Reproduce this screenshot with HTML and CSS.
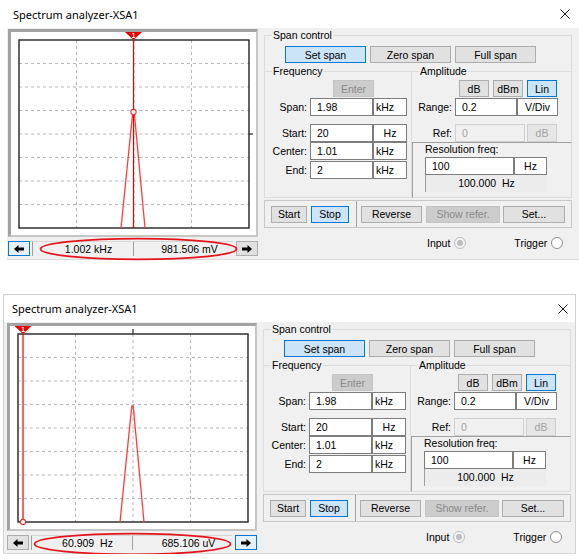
FILE: index.html
```html
<!DOCTYPE html>
<html>
<head>
<meta charset="utf-8">
<link rel="stylesheet" href="styles.css">
</head>
<body>
<div class="win w1">
  <div class="titlebar">
    <span class="title">Spectrum analyzer-XSA1</span>
    <svg class="close" viewBox="0 0 10 10" width="10" height="10"><path d="M0.5 0.5L9.5 9.5M9.5 0.5L0.5 9.5"/></svg>
  </div>
  <div class="client">
    <div class="left">
      <div class="scope">
        <svg class="plot" width="245" height="203" viewBox="0 0 245 203">
          <path class="grid" d="M65.5 8V196M123 8V196M180.5 8V196M8 31.5H238M8 55H238M8 78.5H238M8 102H238M8 125.5H238M8 149H238M8 172.5H238"/>
          <rect class="frame" x="8" y="8" width="230" height="188"/>
          <path class="tick" d="M238 102H242"/>
          <polyline class="sig" points="110,196 121.8,80 123.2,80 134,196"/>
          <path class="cur" d="M122.5 8V196"/>
          <circle class="dot" cx="122.5" cy="80" r="2.6"/>
          <path class="mk" d="M114 0H131L122.5 8Z"/>
          <text class="mkt" x="122.5" y="6">1</text>
        </svg>
      </div>
      <div class="readbar">
        <div class="arrow sel"><svg width="10" height="8" viewBox="0 0 10 8"><path d="M0 4L4.5 0V2.5H10V5.5H4.5V8Z"/></svg></div>
        <div class="read r1">1.002 kHz</div>
        <div class="read r2">981.506 mV</div>
        <div class="arrow ra"><svg width="10" height="8" viewBox="0 0 10 8"><path d="M10 4L5.5 0V2.5H0V5.5H5.5V8Z"/></svg></div>
        <svg class="ring" width="199" height="24" viewBox="0 0 199 24"><ellipse cx="99.5" cy="12" rx="98" ry="10.3"/></svg>
      </div>
    </div>
    <div class="panel">
      <div class="grp spanctl">
        <span class="lgd">Span control</span>
        <div class="row3">
          <div class="btn sel">Set span</div>
          <div class="btn">Zero span</div>
          <div class="btn">Full span</div>
        </div>
      </div>
      <div class="mid">
        <div class="grp freq">
          <span class="lgd">Frequency</span>
          <div class="btn dis enter">Enter</div>
          <div class="frow f1"><span class="lab">Span:</span><span class="inp">1.98</span><span class="unit l">kHz</span></div>
          <div class="frow f2"><span class="lab">Start:</span><span class="inp">20</span><span class="unit">Hz</span></div>
          <div class="frow f3"><span class="lab">Center:</span><span class="inp">1.01</span><span class="unit l">kHz</span></div>
          <div class="frow f4"><span class="lab">End:</span><span class="inp">2</span><span class="unit l">kHz</span></div>
        </div>
        <div class="ampcol">
          <div class="grp amp">
            <span class="lgd">Amplitude</span>
            <div class="arow"><div class="btn">dB</div><div class="btn">dBm</div><div class="btn sel">Lin</div></div>
            <div class="frow range"><span class="lab">Range:</span><span class="inp">0.2</span><span class="unit">V/Div</span></div>
            <div class="frow ref"><span class="lab">Ref:</span><span class="inp dis">0</span><span class="unit dis">dB</span></div>
          </div>
          <div class="res">
            <div class="reslab">Resolution freq:</div>
            <div class="frow rrow"><span class="inp">100</span><span class="unit">Hz</span></div>
            <div class="resval">100.000&nbsp; Hz</div>
          </div>
        </div>
      </div>
      <div class="brow">
        <div class="ss"><div class="btn b-start">Start</div><div class="btn sel b-stop">Stop</div></div>
        <div class="rest"><div class="btn b-rev">Reverse</div><div class="btn dis b-show">Show refer.</div><div class="btn b-set">Set...</div></div>
      </div>
      <div class="radios">
        <span class="rt1">Input</span><span class="radio on"></span><span class="rt2">Trigger</span><span class="radio"></span>
      </div>
    </div>
  </div>
</div>

<div class="win w2">
  <div class="titlebar">
    <span class="title">Spectrum analyzer-XSA1</span>
    <svg class="close" viewBox="0 0 10 10" width="10" height="10"><path d="M0.5 0.5L9.5 9.5M9.5 0.5L0.5 9.5"/></svg>
  </div>
  <div class="client">
    <div class="left">
      <div class="scope">
        <svg class="plot" width="245" height="203" viewBox="0 0 245 203">
          <path class="grid" d="M65.5 8V196M123 8V196M180.5 8V196M8 31.5H238M8 55H238M8 78.5H238M8 102H238M8 125.5H238M8 149H238M8 172.5H238"/>
          <rect class="frame" x="8" y="8" width="230" height="188"/>
          <path class="tick" d="M123 3V8"/>
          <polyline class="sig" points="110,196 121.8,80 123.2,80 134,196"/>
          <path class="cur" d="M13 8V196"/>
          <circle class="dot" cx="13" cy="196" r="2.6"/>
          <path class="mk" d="M4.5 0H21.5L13 8Z"/>
          <text class="mkt" x="13" y="6">1</text>
        </svg>
      </div>
      <div class="readbar">
        <div class="arrow"><svg width="10" height="8" viewBox="0 0 10 8"><path d="M0 4L4.5 0V2.5H10V5.5H4.5V8Z"/></svg></div>
        <div class="read r1">60.909&nbsp; Hz</div>
        <div class="read r2">685.106 uV</div>
        <div class="arrow ra sel"><svg width="10" height="8" viewBox="0 0 10 8"><path d="M10 4L5.5 0V2.5H0V5.5H5.5V8Z"/></svg></div>
        <svg class="ring ring2" width="199" height="24" viewBox="0 0 199 24"><ellipse cx="99.5" cy="12" rx="98" ry="10.3"/></svg>
      </div>
    </div>
    <div class="panel">
      <div class="grp spanctl">
        <span class="lgd">Span control</span>
        <div class="row3">
          <div class="btn sel">Set span</div>
          <div class="btn">Zero span</div>
          <div class="btn">Full span</div>
        </div>
      </div>
      <div class="mid">
        <div class="grp freq">
          <span class="lgd">Frequency</span>
          <div class="btn dis enter">Enter</div>
          <div class="frow f1"><span class="lab">Span:</span><span class="inp">1.98</span><span class="unit l">kHz</span></div>
          <div class="frow f2"><span class="lab">Start:</span><span class="inp">20</span><span class="unit">Hz</span></div>
          <div class="frow f3"><span class="lab">Center:</span><span class="inp">1.01</span><span class="unit l">kHz</span></div>
          <div class="frow f4"><span class="lab">End:</span><span class="inp">2</span><span class="unit l">kHz</span></div>
        </div>
        <div class="ampcol">
          <div class="grp amp">
            <span class="lgd">Amplitude</span>
            <div class="arow"><div class="btn">dB</div><div class="btn">dBm</div><div class="btn sel">Lin</div></div>
            <div class="frow range"><span class="lab">Range:</span><span class="inp">0.2</span><span class="unit">V/Div</span></div>
            <div class="frow ref"><span class="lab">Ref:</span><span class="inp dis">0</span><span class="unit dis">dB</span></div>
          </div>
          <div class="res">
            <div class="reslab">Resolution freq:</div>
            <div class="frow rrow"><span class="inp">100</span><span class="unit">Hz</span></div>
            <div class="resval">100.000&nbsp; Hz</div>
          </div>
        </div>
      </div>
      <div class="brow">
        <div class="ss"><div class="btn b-start">Start</div><div class="btn sel b-stop">Stop</div></div>
        <div class="rest"><div class="btn b-rev">Reverse</div><div class="btn dis b-show">Show refer.</div><div class="btn b-set">Set...</div></div>
      </div>
      <div class="radios">
        <span class="rt1">Input</span><span class="radio on"></span><span class="rt2">Trigger</span><span class="radio"></span>
      </div>
    </div>
  </div>
</div>
</body>
</html>
```

FILE: styles.css
```css
* { box-sizing: border-box; }
body {
  margin: 0;
  background: #fff;
  font-family: "Liberation Sans", Arial, sans-serif;
  font-size: 10.5px;
  color: #000;
}
.win { width: 572px; background: #fff; }
.w1 { margin-left: 7px; }
.w2 {
  margin-left: 3px;
  margin-top: 34px;
  width: 573px;
  border: 1px solid #d2d2d2;
  border-bottom: none;
  overflow: hidden;
}
.titlebar {
  height: 28px;
  display: flex;
  align-items: center;
  justify-content: space-between;
  background: #fff;
  padding: 0 9px 0 6px;
}
.w2 .titlebar { height: 27px; padding: 0 7px 0 8px; }
.title {
  font-family: "Noto Sans", "Liberation Sans", sans-serif;
  font-size: 11px;
  color: #000;
}
.close path { stroke: #1a1a1a; stroke-width: 1; fill: none; }
.close { display: block; }

.client {
  display: flex;
  height: 232px;
  background: #f0f0f0;
  border-bottom: 1px solid #dadada;
}
.w2 .client { padding-left: 2px; height: 232px; }
.left { margin-left: 1px; margin-top: 1px; width: 251px; flex: none; }
.scope {
  width: 250px;
  height: 208px;
  border-style: solid;
  border-width: 3px 2px 2px 3px;
  border-color: #a2a2a2 #c6c6c6 #c6c6c6 #a2a2a2;
  background: #fff;
}
.plot { display: block; }
.grid { stroke: #b8b8b8; stroke-width: 1; stroke-dasharray: 3 3; fill: none; }
.frame { fill: none; stroke: #222; stroke-width: 1.4; }
.tick { stroke: #222; stroke-width: 1.2; fill: none; }
.sig { fill: none; stroke: #ff3b3b; stroke-width: 1.3; }
.cur { stroke: #e80000; stroke-width: 1.2; fill: none; }
.dot { fill: #fff; stroke: #f03030; stroke-width: 1.1; }
.mk { fill: #e80000; }
.mkt { fill: #fff; font-family: "Liberation Sans", sans-serif; font-size: 6.5px; font-weight: bold; text-anchor: middle; }

.readbar { position: relative; display: flex; margin-top: 4px; height: 15px; }
.arrow {
  width: 22px;
  height: 15px;
  border: 1px solid #adadad;
  background: #e1e1e1;
  display: flex;
  align-items: center;
  justify-content: center;
  flex: none;
}
.arrow.sel { border-color: #0078d7; background: #e5f1fb; }
.arrow path { fill: #000; }
.ra { margin-left: 3px; }
.read {
  width: 100px;
  height: 15px;
  background: #f0f0f0;
  border-top: 1px solid #d6d6d6;
  border-left: 1px solid #a0a0a0;
  text-align: center;
  padding-left: 12px;
  line-height: 14px;
  white-space: nowrap;
  flex: none;
}
.r1 { margin-left: 2px; }
.r2 { margin-left: 1px; }
.ring { position: absolute; left: 31px; top: -4px; overflow: visible; }
.ring2 { left: 26px; top: -3px; }
.ring ellipse { fill: none; stroke: #e4141b; stroke-width: 1.8; }

.panel { margin-left: 5px; margin-top: 7px; width: 308px; flex: none; }
.grp { border: 1px solid #dcdcdc; }
.lgd {
  display: block;
  width: max-content;
  margin: -7px 0 0 7px;
  padding: 0 1px;
  height: 13px;
  line-height: 13px;
  background: #f0f0f0;
}
.spanctl { height: 36px; border-bottom: none; }
.row3 { display: flex; gap: 4px; margin: 4px 0 0 20px; }
.row3 .btn { width: 81px; }
.btn {
  height: 17px;
  border: 1px solid #adadad;
  background: #e1e1e1;
  display: flex;
  align-items: center;
  justify-content: center;
  white-space: nowrap;
  flex: none;
}
.btn.sel { background: #cce4f7; border-color: #0078d7; }
.btn.dis { background: #cccccc; border-color: #c4c4c4; color: #8a8a8a; }

.mid { display: flex; height: 127px; }
.freq { width: 148px; height: 127px; flex: none; }
.enter { width: 41px; margin: 2px 0 0 68px; }
.frow { display: flex; height: 18px; }
.f1 { margin-top: 1px; }
.f2 { margin-top: 8px; }
.f3 { margin-top: 0; }
.f4 { margin-top: 1px; }
.lab { width: 42px; text-align: right; line-height: 18px; flex: none; }
.inp {
  background: #fff;
  border: 1px solid #7d7d7d;
  padding-left: 6px;
  line-height: 16px;
  flex: none;
}
.unit {
  background: #fff;
  border: 1px solid #7d7d7d;
  text-align: center;
  line-height: 16px;
  flex: none;
}
.unit.l { text-align: left; padding-left: 2px; }
.freq .inp { width: 63px; margin-left: 3px; }
.freq .unit { width: 34px; }

.ampcol { width: 160px; flex: none; }
.amp { height: 71px; border-left: none; border-bottom: none; }
.arow { display: flex; gap: 4px; margin: 2px 0 0 47px; }
.arow .btn { width: 30px; }
.amp .lab { width: 40px; }
.range { margin-top: 1px; }
.range .inp { width: 62px; margin-left: 3px; }
.range .unit { width: 41px; }
.ref { margin-top: 8px; }
.ref .inp { width: 70px; margin-left: 3px; }
.ref .unit { width: 30px; margin-left: 2px; }
.inp.dis { background: #f0f0f0; border-color: #cfcfcf; color: #a3a3a3; }
.unit.dis { background: #e6e6e6; border-color: #cfcfcf; color: #a3a3a3; }

.res {
  height: 56px;
  border: 1px solid;
  border-color: #a0a0a0 #dcdcdc #dcdcdc #a0a0a0;
}
.reslab { margin-left: 12px; height: 13px; line-height: 13px; }
.rrow { margin-top: 1px; margin-left: 12px; }
.rrow .inp { width: 89px; }
.rrow .unit { width: 33px; }
.resval {
  margin-left: 12px;
  width: 122px;
  height: 17px;
  border-left: 1px solid #a0a0a0;
  background: #ececec;
  text-align: center;
  line-height: 17px;
}

.brow {
  display: flex;
  height: 28px;
  margin-top: 2px;
  border: 1px solid #c8c8c8;
}
.ss {
  width: 92px;
  display: flex;
  align-items: center;
  padding-left: 6px;
  border-right: 1px solid #a0a0a0;
  flex: none;
}
.rest { display: flex; align-items: center; padding-left: 4px; }
.b-start { width: 36px; }
.b-stop { width: 38px; margin-left: 4px; }
.b-rev { width: 61px; }
.b-show { width: 74px; margin-left: 4px; }
.b-set { width: 62px; margin-left: 3px; }

.radios { display: flex; align-items: center; height: 14px; margin-top: 8px; }
.rt1 { margin-left: 163px; }
.rt2 { margin-left: 48px; }
.radio {
  width: 12px;
  height: 12px;
  border-radius: 50%;
  border: 1px solid #8c8c8c;
  background: #fff;
  margin-left: 4px;
  flex: none;
}
.radio.on {
  border-color: #bcbcbc;
  background: radial-gradient(circle, #c0c0c0 0 2.8px, #f4f4f4 3.3px);
}
```
